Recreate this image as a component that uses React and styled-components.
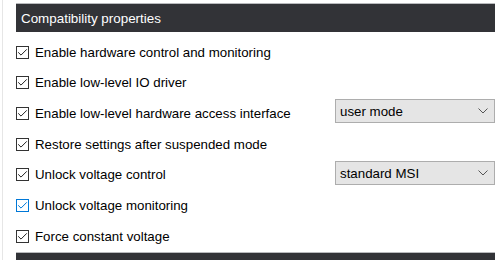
import React from 'react'
import styled, { createGlobalStyle } from 'styled-components'

const GlobalStyle = createGlobalStyle`
  html, body { margin: 0; padding: 0; background: #fff; }
  body { font-family: "Liberation Sans", Arial, sans-serif; overflow: hidden; }
`

const Page = styled.div`
  width: 502px;
  height: 260px;
  display: flex;
  padding-left: 2px;
  box-sizing: border-box;
`

const Panel = styled.div`
  flex: 1;
  border-left: 1px solid #e6e6e6;
  padding: 3px 7px 0 13px;
  display: flex;
  flex-direction: column;
`

const SectionHeader = styled.div`
  height: 29px;
  background: #323337;
  border-top: 1px solid #b9babd;
  color: #fff;
  font-size: 13.4px;
  display: flex;
  align-items: center;
  padding-left: 5px;
  box-sizing: border-box;
`

const Rows = styled.div`
  display: grid;
  grid-auto-rows: 30.67px;
  padding-top: 5px;
`

const Row = styled.label`
  display: flex;
  align-items: center;
  font-size: 13.3px;
  color: #000;
`

const Box = styled.span`
  width: 13px;
  height: 13px;
  box-sizing: border-box;
  border: 1px solid ${(p) => (p.$focus ? '#0078d7' : '#333')};
  background: #fff;
  display: flex;
  align-items: center;
  justify-content: center;
  margin-right: 6px;
  flex-shrink: 0;
`

const Label = styled.span`
  flex: 1;
`

const Select = styled.div`
  width: 160px;
  height: 24px;
  box-sizing: border-box;
  background: #e5e5e5;
  border: 1px solid #adadad;
  display: flex;
  align-items: center;
  justify-content: space-between;
  padding: 0 6px 0 4px;
  font-size: 13.3px;
  color: #000;
  margin-top: ${(p) => p.$shift || 0}px;
`

const BottomBar = styled.div`
  margin-top: auto;
  height: 7px;
  background: #323337;
  border-top: 1px solid #b9babd;
`

const Check = ({ color }) => (
  <svg width="11" height="11" viewBox="0 0 11 11">
    <path d="M1.2 5.3 L4 8.1 L9.8 2.3" fill="none" stroke={color} strokeWidth="1" />
  </svg>
)

const Chevron = () => (
  <svg width="10" height="6" viewBox="0 0 10 6">
    <path d="M0.5 0.5 L5 5 L9.5 0.5" fill="none" stroke="#555" strokeWidth="1" />
  </svg>
)

const items = [
  { label: 'Enable hardware control and monitoring' },
  { label: 'Enable low-level IO driver' },
  { label: 'Enable low-level hardware access interface', select: 'user mode', shift: -5 },
  { label: 'Restore settings after suspended mode' },
  { label: 'Unlock voltage control', select: 'standard MSI', shift: -3 },
  { label: 'Unlock voltage monitoring', focus: true },
  { label: 'Force constant voltage' },
]

const App = () => (
  <>
    <GlobalStyle />
    <Page>
      <Panel>
        <SectionHeader>Compatibility properties</SectionHeader>
        <Rows>
          {items.map((it) => (
            <Row key={it.label}>
              <Box $focus={it.focus}>
                <Check color={it.focus ? '#0078d7' : '#222'} />
              </Box>
              <Label>{it.label}</Label>
              {it.select && (
                <Select $shift={it.shift}>
                  <span>{it.select}</span>
                  <Chevron />
                </Select>
              )}
            </Row>
          ))}
        </Rows>
        <BottomBar />
      </Panel>
    </Page>
  </>
)

export default App
